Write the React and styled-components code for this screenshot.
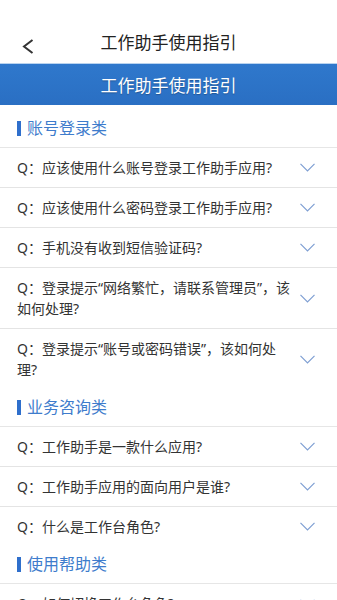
import React from "react";
import styled, { createGlobalStyle } from "styled-components";

const GlobalStyle = createGlobalStyle`
  html, body {
    margin: 0;
    padding: 0;
    background: #fff;
  }
  body {
    font-family: "Noto Sans", "Noto Sans CJK SC", sans-serif;
    color: #333;
  }
`

const Page = styled.div`
  width: 337px;
  background: #fff;
`

const TopBar = styled.div`
  height: 63px;
  padding-top: 22px;
  box-sizing: border-box;
  display: flex;
  align-items: center;
  justify-content: center;
  position: relative;
`

const BackButton = styled.div`
  position: absolute;
  left: 18px;
  top: 34px;
  width: 20px;
  height: 24px;
  display: flex;
  align-items: center;
  justify-content: center;
`

const TopTitle = styled.div`
  font-size: 17px;
  color: #222;
  line-height: 24px;
`

const Banner = styled.div`
  height: 42px;
  background: linear-gradient(#2f78cc, #2a6fc3);
  border-top: 1px solid #b9d3ef;
  box-sizing: border-box;
  display: flex;
  align-items: center;
  justify-content: center;
  color: #fff;
  font-size: 17px;
  text-shadow: 0 1px 1px rgba(0, 0, 0, 0.25);
`

const SectionHead = styled.div`
  display: flex;
  align-items: center;
  padding: ${(p) => (p.$first ? "12px" : "7px")} 17px 8px;
  border-bottom: 1px solid #e6e6e6;
`

const Bar = styled.span`
  width: 4px;
  height: 15px;
  background: #2f6fcc;
  margin-right: 6px;
`

const SectionTitle = styled.span`
  font-size: 16px;
  line-height: 22px;
  color: #3e7ccc;
`

const Row = styled.div`
  display: flex;
  align-items: center;
  gap: 8px;
  padding: 9px 22px 9px 17px;
  & + & {
    border-top: 1.5px solid #e4e4e4;
  }
`

const Question = styled.div`
  flex: 1;
  font-size: 14px;
  line-height: 21px;
  color: #333;
`

const Chevron = () => (
  <svg width="15" height="9" viewBox="0 0 15 9">
    <polyline points="0.5,0.8 7.5,8 14.5,0.8" fill="none" stroke="#7f9fd3" strokeWidth="1.2" />
  </svg>
)

const sections = [
  {
    title: "账号登录类",
    items: [
      "Q：应该使用什么账号登录工作助手应用?",
      "Q：应该使用什么密码登录工作助手应用?",
      "Q：手机没有收到短信验证码?",
      "Q：登录提示“网络繁忙，请联系管理员”，该如何处理?",
      "Q：登录提示“账号或密码错误”，该如何处理?",
    ],
  },
  {
    title: "业务咨询类",
    items: [
      "Q：工作助手是一款什么应用?",
      "Q：工作助手应用的面向用户是谁?",
      "Q：什么是工作台角色?",
    ],
  },
  {
    title: "使用帮助类",
    items: ["Q：如何切换工作台角色?"],
  },
]

export default function App() {
  return (
    <Page>
      <GlobalStyle />
      <TopBar>
        <BackButton>
          <svg width="12" height="15" viewBox="0 0 12 15">
            <polyline points="10.5,1 2,7.5 10.5,14" fill="none" stroke="#333" strokeWidth="2" />
          </svg>
        </BackButton>
        <TopTitle>工作助手使用指引</TopTitle>
      </TopBar>
      <Banner>工作助手使用指引</Banner>
      {sections.map((s, i) => (
        <div key={s.title}>
          <SectionHead $first={i === 0}>
            <Bar />
            <SectionTitle>{s.title}</SectionTitle>
          </SectionHead>
          {s.items.map((q) => (
            <Row key={q}>
              <Question>{q}</Question>
              <Chevron />
            </Row>
          ))}
        </div>
      ))}
    </Page>
  )
}
